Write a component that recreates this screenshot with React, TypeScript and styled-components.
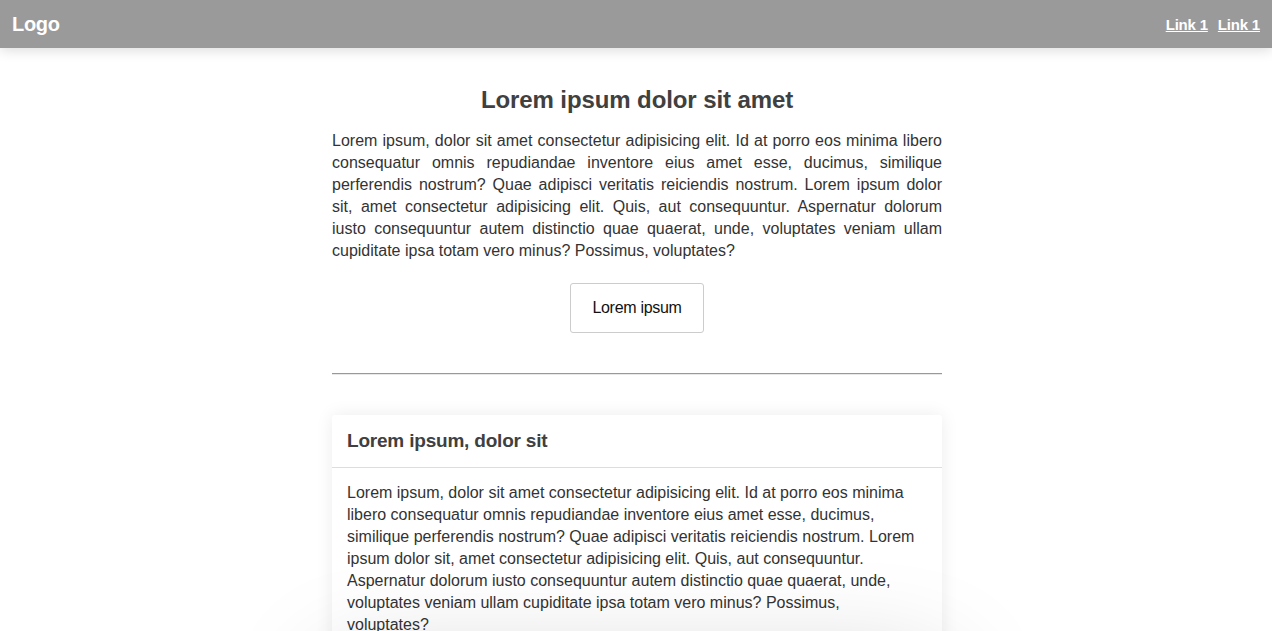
import React from "react";
import styled, { createGlobalStyle } from "styled-components";

const Global = createGlobalStyle`
  * { box-sizing: border-box; }
  html, body { margin: 0; padding: 0; background: #fff; }
  body { font-family: "Liberation Sans", Arial, Helvetica, sans-serif; color: #333; }
`;

const Header = styled.header`
  height: 48px;
  background: #9a9a9a;
  display: flex;
  align-items: center;
  justify-content: space-between;
  padding: 0 12px;
  box-shadow: 0 2px 12px rgba(0, 0, 0, 0.15);
  position: relative;
  z-index: 2;
`;

const Logo = styled.div`
  color: #fff;
  font-weight: bold;
  font-size: 20px;
  letter-spacing: -0.3px;
`;

const Nav = styled.nav`
  display: flex;
  gap: 10px;
`;

const NavLink = styled.a`
  color: #fff;
  font-size: 15px;
  font-weight: bold;
  text-decoration: underline;
  letter-spacing: -0.2px;
`;

const Page = styled.div`
  padding-left: 2px;
`;

const Main = styled.main`
  width: 610px;
  margin: 0 auto;
  padding-top: 37px;
  display: flex;
  flex-direction: column;
`;

const Title = styled.h1`
  margin: 0;
  font-size: 24px;
  line-height: 30px;
  text-align: center;
  color: #404040;
  letter-spacing: -0.1px;
`;

const Paragraph = styled.p`
  margin: 15px 0 0;
  font-size: 16px;
  line-height: 22px;
  text-align: justify;
  color: #333;
`;

const ButtonRow = styled.div`
  display: flex;
  justify-content: center;
  margin-top: 21px;
`;

const Button = styled.button`
  width: 134px;
  height: 50px;
  background: #fff;
  border: 1px solid #ccc;
  border-radius: 3px;
  font-family: inherit;
  font-size: 16px;
  color: #111;
  letter-spacing: -0.3px;
`;

const Divider = styled.hr`
  margin: 40px 0 0;
  border: none;
  border-top: 1px solid #999;
  border-bottom: 1px solid #e8e8e8;
  height: 0;
`;

const Card = styled.section<{ $deep?: boolean }>`
  margin-top: ${(p) => (p.$deep ? "20px" : "40px")};
  background: #fff;
  border-radius: 3px;
  box-shadow: ${(p) =>
    p.$deep ? "0 0 110px rgba(0,0,0,0.22)" : "0 0 18px rgba(0,0,0,0.08)"};
`;

const CardHeader = styled.div`
  height: 53px;
  display: flex;
  align-items: center;
  padding: 0 15px;
  border-bottom: 1px solid #ddd;
`;

const CardTitle = styled.h2`
  margin: 0;
  font-size: 19px;
  color: #404040;
  letter-spacing: -0.2px;
`;

const CardBody = styled.p`
  margin: 0;
  padding: 14px 18px 15px 15px;
  font-size: 16px;
  line-height: 22px;
  color: #333;
`;

const text =
  "Lorem ipsum, dolor sit amet consectetur adipisicing elit. Id at porro eos minima libero consequatur omnis repudiandae inventore eius amet esse, ducimus, similique perferendis nostrum? Quae adipisci veritatis reiciendis nostrum. Lorem ipsum dolor sit, amet consectetur adipisicing elit. Quis, aut consequuntur. Aspernatur dolorum iusto consequuntur autem distinctio quae quaerat, unde, voluptates veniam ullam cupiditate ipsa totam vero minus? Possimus, voluptates?";

export default function App() {
  return (
    <>
      <Global />
      <Header>
        <Logo>Logo</Logo>
        <Nav>
          <NavLink href="#">Link 1</NavLink>
          <NavLink href="#">Link 1</NavLink>
        </Nav>
      </Header>
      <Page>
        <Main>
          <Title>Lorem ipsum dolor sit amet</Title>
          <Paragraph>{text}</Paragraph>
          <ButtonRow>
            <Button>Lorem ipsum</Button>
          </ButtonRow>
          <Divider />
          <Card>
            <CardHeader>
              <CardTitle>Lorem ipsum, dolor sit</CardTitle>
            </CardHeader>
            <CardBody>{text}</CardBody>
          </Card>
          <Card $deep>
            <CardHeader>
              <CardTitle>Lorem ipsum, dolor sit</CardTitle>
            </CardHeader>
            <CardBody>{text}</CardBody>
          </Card>
        </Main>
      </Page>
    </>
  );
}
